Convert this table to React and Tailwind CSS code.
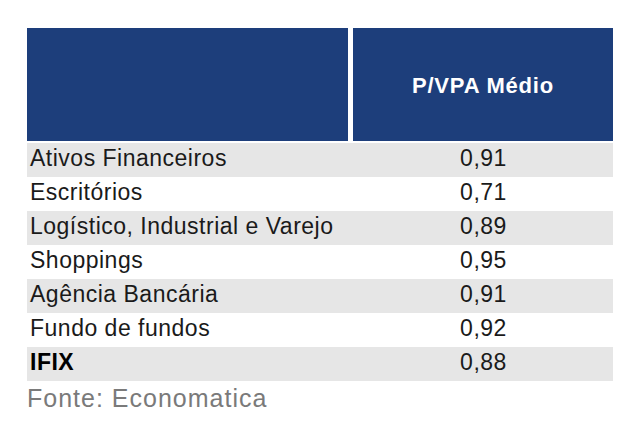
import React from "react";

const rows = [
    { label: "Ativos Financeiros", value: "0,91", shade: true },
    { label: "Escritórios", value: "0,71" },
    { label: "Logístico, Industrial e Varejo", value: "0,89", shade: true },
    { label: "Shoppings", value: "0,95" },
    { label: "Agência Bancária", value: "0,91", shade: true },
    { label: "Fundo de fundos", value: "0,92" },
    { label: "IFIX", value: "0,88", shade: true, bold: true },
];

const App = () => {
    return (
        <div
            className="min-h-screen bg-white pt-[28px] pl-[27px]"
            style={{ fontFamily: '"Liberation Sans", Arial, sans-serif' }}
        >
            <div className="w-[586px]">
                {/* Header */}
                <div className="grid grid-cols-[321px_260px] gap-x-[5px] h-[113px]">
                    <div className="bg-[#1d3e7b]" />
                    <div className="bg-[#1d3e7b] flex items-center justify-center pt-[2px]">
                        <span className="text-white font-bold text-[22px] leading-none tracking-[0.8px]">
                            P/VPA Médio
                        </span>
                    </div>
                </div>

                {/* Rows */}
                <div className="mt-[2px]">
                    {rows.map((row) => (
                        <div
                            key={row.label}
                            className={`grid grid-cols-[322px_264px] h-[34px] items-center pb-[4px] text-[23px] leading-none tracking-[0.5px] text-[#1a1a1a] ${row.shade ? "bg-[#e6e6e6]" : "bg-white"}`}
                        >
                            <span className={`pl-[3px] ${row.bold ? "font-bold text-black" : ""}`}>
                                {row.label}
                            </span>
                            <span className="text-center pl-[5px]">{row.value}</span>
                        </div>
                    ))}
                </div>
            </div>

            <p className="mt-[5px] text-[25px] leading-none tracking-[1px] text-[#7a7a7a]">
                Fonte: Economatica
            </p>
        </div>
    );
};

export default App;
